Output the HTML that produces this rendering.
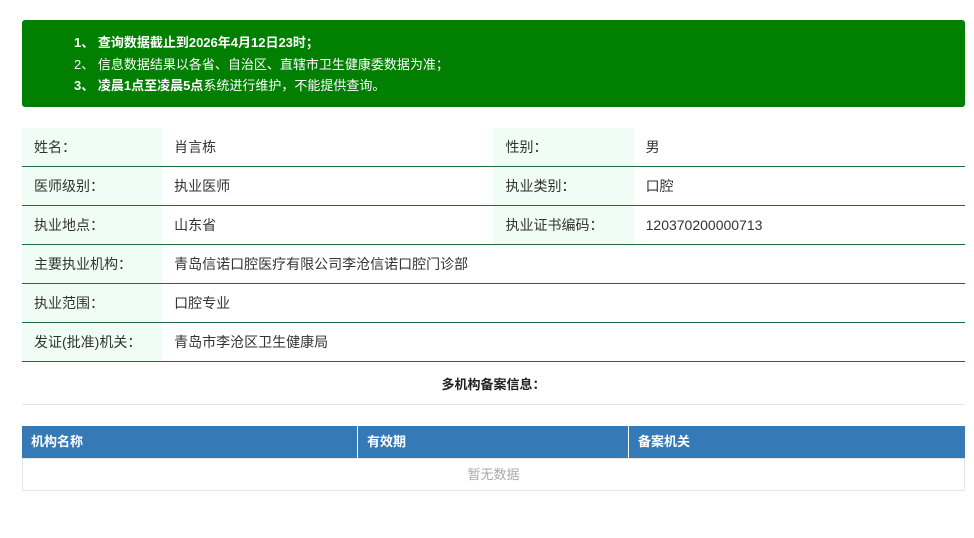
<!DOCTYPE html>
<html><head><meta charset="utf-8"><style>
body{margin:0;width:974px;height:538px;background:#fff;font-family:"Liberation Sans","Noto Sans CJK SC",sans-serif;font-size:14px;color:#333;position:relative;overflow:hidden}
.notice{position:absolute;left:22px;top:20px;width:943px;height:87px;background:#007f00;border-radius:3px;color:#fff;font-size:13px;font-weight:bold;line-height:21.5px;box-sizing:border-box;padding:12px 0 0 52px}
.notice span{font-weight:normal}
table.info{position:absolute;left:22px;top:128px;width:943px;border-collapse:collapse}
table.info td{height:39px;border-bottom:1px solid #1e6b3c;padding:0 0 0 12px;box-sizing:border-box}
td.l{background:#effdf6;width:140px}
td.v{width:331px}
.title{position:absolute;left:22px;top:374px;width:943px;text-align:center;font-weight:bold;font-size:13px;color:#222}
.hr{position:absolute;left:22px;top:404px;width:943px;height:1px;background:#e6e6e6}
.th{position:absolute;top:426px;height:32px;background:#3579b6;color:#fff;font-weight:bold;font-size:13px;line-height:32px;padding-left:9px;box-sizing:border-box}
.empty{position:absolute;left:22px;top:458px;width:943px;height:33px;border:1px solid #e6e6e6;box-sizing:border-box;text-align:center;line-height:31px;color:#aaa;font-size:13px}
</style></head><body>
<div class="notice">1、 查询数据截止到2026年4月12日23时；<br><span>2、 信息数据结果以各省、自治区、直辖市卫生健康委数据为准；</span><br>3、 凌晨1点至凌晨5点<span>系统进行维护，不能提供查询。</span></div>
<table class="info">
<tr><td class="l" style="height:38px">姓名：</td><td class="v" style="height:38px">肖言栋</td><td class="l" style="height:38px">性别：</td><td class="v" style="height:38px">男</td></tr>
<tr><td class="l">医师级别：</td><td class="v">执业医师</td><td class="l">执业类别：</td><td class="v">口腔</td></tr>
<tr><td class="l">执业地点：</td><td class="v">山东省</td><td class="l">执业证书编码：</td><td class="v">120370200000713</td></tr>
<tr><td class="l">主要执业机构：</td><td colspan="3">青岛信诺口腔医疗有限公司李沧信诺口腔门诊部</td></tr>
<tr><td class="l">执业范围：</td><td colspan="3">口腔专业</td></tr>
<tr><td class="l">发证(批准)机关：</td><td colspan="3">青岛市李沧区卫生健康局</td></tr>
</table>
<div class="title">多机构备案信息：</div>
<div class="hr"></div>
<div class="th" style="left:22px;width:335px">机构名称</div>
<div class="th" style="left:358px;width:270px">有效期</div>
<div class="th" style="left:629px;width:336px">备案机关</div>
<div class="empty">暂无数据</div>
</body></html>
